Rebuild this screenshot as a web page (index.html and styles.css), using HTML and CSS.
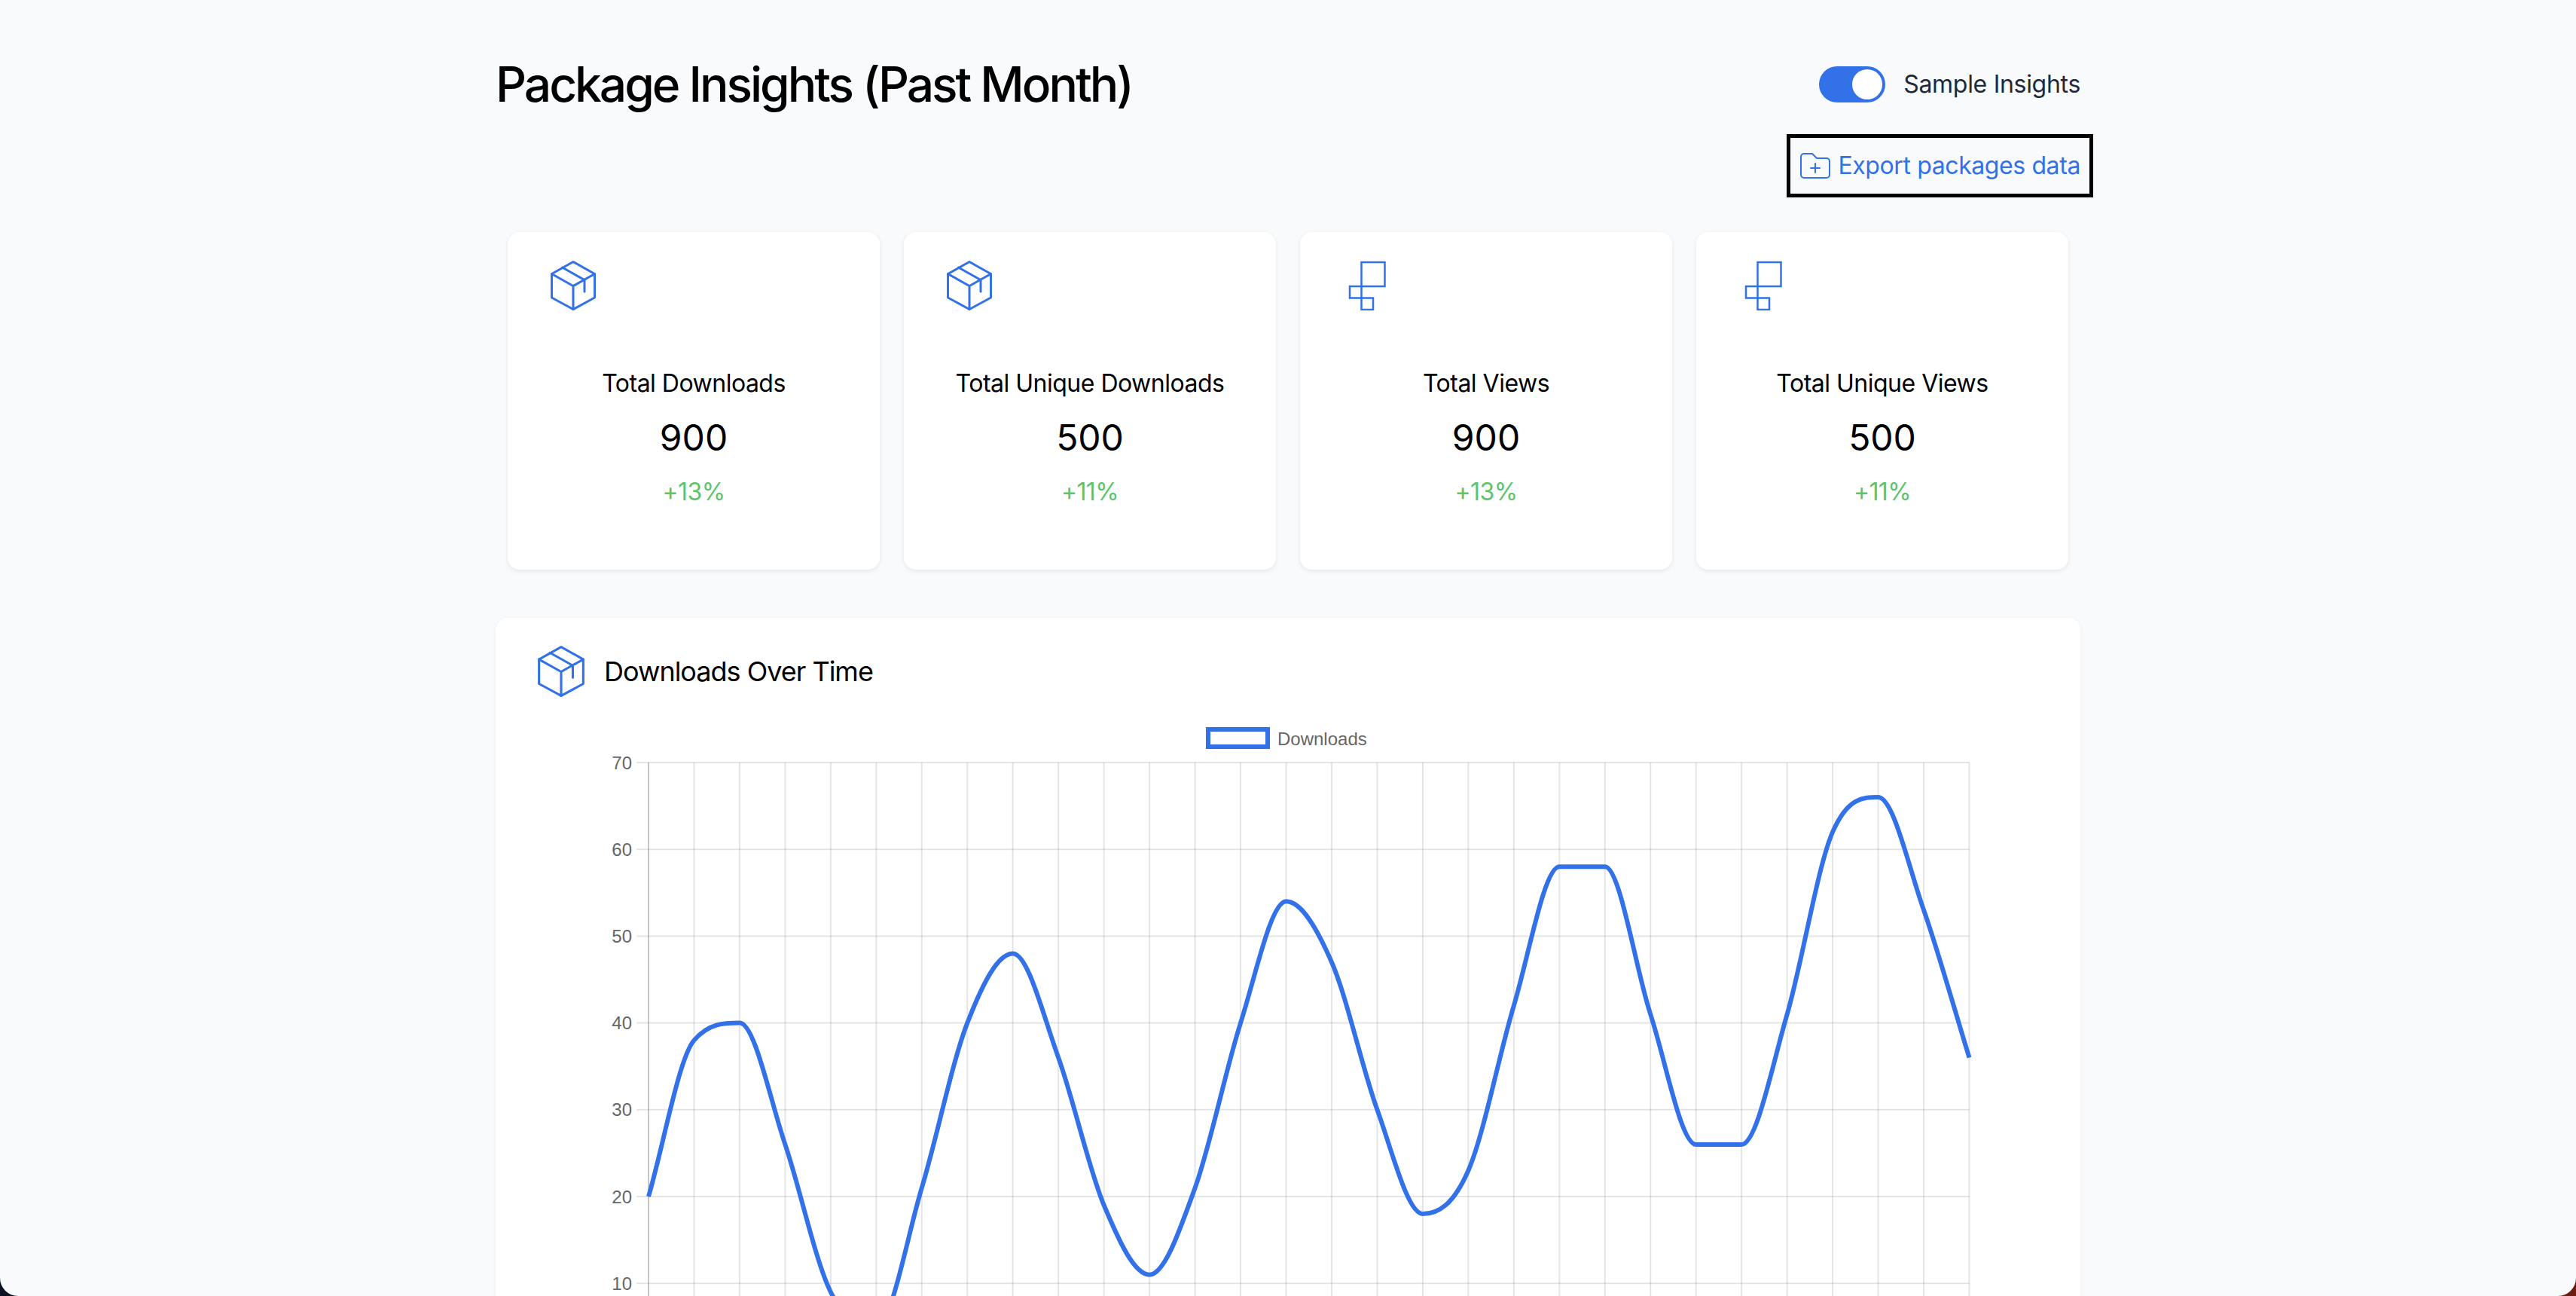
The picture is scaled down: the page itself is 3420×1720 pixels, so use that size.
FILE: index.html
```html
<!DOCTYPE html>
<html lang="en">
<head>
  <meta charset="UTF-8">
  <title>Package Insights</title>
  <link rel="stylesheet" href="styles.css">
</head>
<body>

<div class="app">
  <div class="page">

    <div class="page-header">
      <h1 class="page-title">Package Insights (Past Month)</h1>
      <div class="header-actions">
        <div class="toggle-row">
          <span class="toggle"><span class="toggle-knob"></span></span>
          <span class="toggle-label">Sample Insights</span>
        </div>
        <a class="export-link" href="#">
          <svg class="folder-icon" viewBox="0 0 40 34" fill="none" stroke="currentColor" stroke-width="2" stroke-linejoin="round" stroke-linecap="round">
            <path d="M1 5a4 4 0 0 1 4-4h11l6 6h13a4 4 0 0 1 4 4v18a4 4 0 0 1-4 4H5a4 4 0 0 1-4-4z"/>
            <path d="M20 14v12M14 20h12"/>
          </svg>
          Export packages data
        </a>
      </div>
    </div>

    <div class="stats">
      <div class="stat-card">
        <svg class="stat-icon" viewBox="0 0 60 66"><use href="#box"/></svg>
        <div class="stat-name">Total Downloads</div>
        <div class="stat-value">900</div>
        <div class="stat-change">+13%</div>
      </div>
      <div class="stat-card">
        <svg class="stat-icon" viewBox="0 0 60 66"><use href="#box"/></svg>
        <div class="stat-name">Total Unique Downloads</div>
        <div class="stat-value">500</div>
        <div class="stat-change">+11%</div>
      </div>
      <div class="stat-card">
        <svg class="stat-icon stat-icon-views" viewBox="0 0 50 66"><use href="#squares"/></svg>
        <div class="stat-name">Total Views</div>
        <div class="stat-value">900</div>
        <div class="stat-change">+13%</div>
      </div>
      <div class="stat-card">
        <svg class="stat-icon stat-icon-views" viewBox="0 0 50 66"><use href="#squares"/></svg>
        <div class="stat-name">Total Unique Views</div>
        <div class="stat-value">500</div>
        <div class="stat-change">+11%</div>
      </div>
    </div>

    <div class="chart-card">
      <div class="chart-header">
        <svg class="chart-icon" viewBox="0 0 60 66"><use href="#box"/></svg>
        <h2 class="chart-title">Downloads Over Time</h2>
      </div>
      <svg id="chart" class="chart" viewBox="0 0 1950 900"></svg>
    </div>

  </div>
</div>

<svg class="icon-defs" width="0" height="0">
  <defs>
    <g id="box" fill="none" stroke="#3271e8" stroke-width="3" stroke-linejoin="round" stroke-linecap="round">
      <path d="M30 1.500 58.500 17.500v31.500L30 64.500 1.500 49V17.500z"/>
      <path d="M1.500 17.500 30 33.500 58.500 17.500M30 33.500V64.500"/>
      <path d="M15.500 9 45 25.500V41"/>
    </g>
    <g id="squares" fill="none" stroke="#3271e8" stroke-width="2.500">
      <path d="M17.500 2h31v32h-31z"/>
      <path d="M2 34h15.500v15.500H2z"/>
      <path d="M17.500 49.500H33V65H17.500z"/>
    </g>
  </defs>
</svg>

<script src="chart.js"></script>

</body>
</html>
```

FILE: styles.css
```css
html, body {
  margin: 0;
  padding: 0;
  height: 100%;
}
body {
  background: linear-gradient(to right, #0b1322 50%, #6b1e10 50%);
  font-family: Inter, 'Noto Sans', sans-serif;
  overflow: hidden;
}
.app {
  height: 100%;
  background: #f9fafc;
  border-radius: 0 0 24px 24px;
  overflow: hidden;
}
.page {
  width: 2104px;
  margin: 0 auto;
  padding-top: 72px;
}
.page-header {
  display: flex;
  justify-content: space-between;
  align-items: flex-start;
}
.page-title {
  margin: 0;
  font-size: 64px;
  line-height: 80px;
  font-weight: 500;
  color: #000;
  letter-spacing: -3px;
}
.header-actions {
  display: flex;
  flex-direction: column;
  align-items: flex-end;
  margin-top: 16px;
}
.toggle-row {
  display: flex;
  align-items: center;
  gap: 24px;
}
.toggle {
  display: flex;
  justify-content: flex-end;
  align-items: center;
  width: 88px;
  height: 48px;
  padding: 4px;
  box-sizing: border-box;
  border-radius: 24px;
  background: #3271e8;
}
.toggle-knob {
  width: 40px;
  height: 40px;
  border-radius: 50%;
  background: #fff;
}
.toggle-label {
  font-size: 32px;
  line-height: 48px;
  color: #1f2937;
  letter-spacing: -0.3px;
}
.export-link {
  display: flex;
  align-items: center;
  gap: 10px;
  margin: 47px -12px 0 0;
  padding: 13px 12px 13px 13px;
  color: #3271e8;
  font-size: 32px;
  line-height: 48px;
  letter-spacing: -0.4px;
  text-decoration: none;
  outline: 5px solid #000;
}
.folder-icon {
  width: 40px;
  height: 34px;
}
.stats {
  display: grid;
  grid-template-columns: repeat(4, 1fr);
  gap: 32px;
  padding: 0 16px;
  margin-top: 51px;
}
.stat-card {
  height: 448px;
  box-sizing: border-box;
  padding: 38px 56px 0;
  background: #fff;
  border-radius: 16px;
  box-shadow: 0 2px 6px rgba(0, 0, 0, 0.08);
  text-align: center;
}
.stat-icon {
  display: block;
  width: 60px;
  height: 66px;
  margin-left: 1px;
}
.stat-icon-views {
  width: 50px;
  margin-left: 8px;
}
.stat-name {
  margin-top: 73px;
  font-size: 32px;
  line-height: 48px;
  color: #000;
  letter-spacing: -0.5px;
}
.stat-value {
  margin-top: 20px;
  font-size: 48px;
  line-height: 56px;
  color: #000;
}
.stat-change {
  margin-top: 20px;
  font-size: 32px;
  line-height: 48px;
  color: #5cc46a;
  letter-spacing: -0.6px;
}
.chart-card {
  margin-top: 64px;
  padding: 37px 56px 0;
  background: #fff;
  border-radius: 16px;
  box-shadow: 0 2px 6px rgba(0, 0, 0, 0.06);
}
.chart-header {
  display: flex;
  align-items: center;
  gap: 26px;
}
.chart-icon {
  width: 62px;
  height: 68px;
}
.chart-title {
  margin: 0;
  font-size: 36px;
  font-weight: 400;
  color: #000;
  letter-spacing: -1px;
}
.chart {
  display: block;
  width: 1950px;
  height: 900px;
  margin-top: 34px;
  font-family: 'Liberation Sans', Arial, sans-serif;
  font-size: 24px;
}
.icon-defs {
  position: absolute;
}
```

FILE: chart.js
```js
const downloads = [20, 38, 40, 26, 9, 5, 21, 40, 48, 36, 19, 11, 21, 40, 54, 47, 30, 18, 23, 42, 58, 58, 41, 26, 26, 41, 62, 66, 53, 36];

const chart = document.getElementById('chart');
const plotLeft = 147;
const plotRight = 1900.5;
const plotTop = 53;
const plotBottom = 900;
const stepY = 115.2;
const stepX = (plotRight - plotLeft) / (downloads.length - 1);

function yFor(value) {
  return plotTop + (70 - value) * stepY / 10;
}

function addLine(x1, y1, x2, y2, color) {
  const line = document.createElementNS('http://www.w3.org/2000/svg', 'line');
  line.setAttribute('x1', x1);
  line.setAttribute('y1', y1);
  line.setAttribute('x2', x2);
  line.setAttribute('y2', y2);
  line.setAttribute('stroke', color);
  line.setAttribute('stroke-width', 2);
  chart.appendChild(line);
}

function addText(x, y, text, anchor) {
  const label = document.createElementNS('http://www.w3.org/2000/svg', 'text');
  label.setAttribute('x', x);
  label.setAttribute('y', y);
  label.setAttribute('fill', '#666');
  label.setAttribute('text-anchor', anchor);
  label.textContent = text;
  chart.appendChild(label);
}

// same monotone curve the chart library draws
function monotonePath(points) {
  const n = points.length;
  const slopes = [];
  for (let i = 0; i < n - 1; i++) {
    slopes.push((points[i + 1].y - points[i].y) / stepX);
  }
  const tangents = [slopes[0]];
  for (let i = 1; i < n - 1; i++) {
    tangents.push(slopes[i - 1] * slopes[i] <= 0 ? 0 : (slopes[i - 1] + slopes[i]) / 2);
  }
  tangents.push(slopes[n - 2]);
  for (let i = 0; i < n - 1; i++) {
    if (slopes[i] === 0) {
      tangents[i] = 0;
      tangents[i + 1] = 0;
      continue;
    }
    const a = tangents[i] / slopes[i];
    const b = tangents[i + 1] / slopes[i];
    const s = a * a + b * b;
    if (s > 9) {
      const t = 3 / Math.sqrt(s);
      tangents[i] = t * a * slopes[i];
      tangents[i + 1] = t * b * slopes[i];
    }
  }
  let d = `M${points[0].x} ${points[0].y}`;
  for (let i = 0; i < n - 1; i++) {
    const dx = stepX / 3;
    d += `C${points[i].x + dx} ${points[i].y + tangents[i] * dx} ${points[i + 1].x - dx} ${points[i + 1].y - tangents[i + 1] * dx} ${points[i + 1].x} ${points[i + 1].y}`;
  }
  return d;
}

for (let i = 0; i < downloads.length; i++) {
  const x = plotLeft + i * stepX;
  addLine(x, plotTop, x, plotBottom, i === 0 ? 'rgba(0,0,0,0.22)' : 'rgba(0,0,0,0.1)');
}

// the page is cut off just under the 10 line
for (let v = 70; v >= 10; v -= 10) {
  addLine(plotLeft - 16, yFor(v), plotRight, yFor(v), 'rgba(0,0,0,0.1)');
  addText(plotLeft - 22, yFor(v) + 8.5, String(v), 'end');
}

const legend = document.createElementNS('http://www.w3.org/2000/svg', 'rect');
legend.setAttribute('x', 890);
legend.setAttribute('y', 9);
legend.setAttribute('width', 79);
legend.setAttribute('height', 23);
legend.setAttribute('fill', 'none');
legend.setAttribute('stroke', '#3271e8');
legend.setAttribute('stroke-width', 6);
chart.appendChild(legend);
addText(982, 30, 'Downloads', 'start');

const curve = document.createElementNS('http://www.w3.org/2000/svg', 'path');
curve.setAttribute('d', monotonePath(downloads.map((v, i) => ({ x: plotLeft + i * stepX, y: yFor(v) }))));
curve.setAttribute('fill', 'none');
curve.setAttribute('stroke', '#3271e8');
curve.setAttribute('stroke-width', 6);
chart.appendChild(curve);
```
